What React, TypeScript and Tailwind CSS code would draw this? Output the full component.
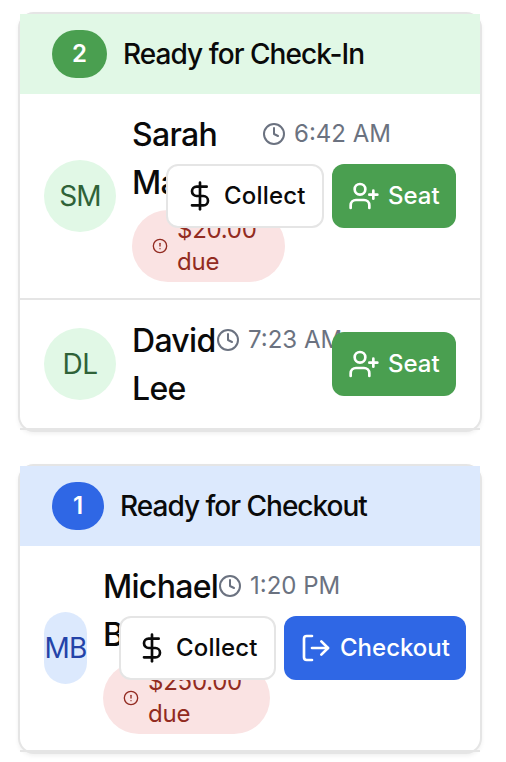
import type { ReactNode } from "react";
import { CircleAlert, Clock, DollarSign, LogOut, UserPlus } from "lucide-react";

function Card({ header, children }: { header: ReactNode; children: ReactNode }) {
  return (
    <section className="rounded-[16px] border-2 border-[#e5e5e5] bg-white shadow-[0_2px_4px_rgba(0,0,0,0.06)]">
      {header}
      {children}
    </section>
  );
}

function Name({ first, last, className }: { first: string; last: string; className: string }) {
  return (
    <h3 className={`h-24 pt-px text-[32px] leading-[48px] font-medium tracking-[-0.7px] ${className}`}>
      {first}
      <br />
      {last}
    </h3>
  );
}

function Due({ amount, className }: { amount: string; className: string }) {
  return (
    <div className={`mt-1 flex h-[72px] items-center gap-[9px] rounded-full bg-[#fae3e3] pl-5 text-2xl leading-8 text-[#922b21] ${className}`}>
      <CircleAlert size={16} className="shrink-0" />
      <div>
        <div className="tracking-[-0.25px]">{amount}</div>
        <div className="tracking-[-0.25px]">due</div>
      </div>
    </div>
  );
}

function Time({ value }: { value: string }) {
  return (
    <div className="flex h-12 items-center gap-2 whitespace-nowrap text-2xl text-[#6b7280]">
      <Clock size={24} />
      <span>{value}</span>
    </div>
  );
}

function Collect({ className }: { className: string }) {
  return (
    <button className={`flex h-16 items-center gap-2 rounded-[12px] border-2 border-[#e5e5e5] bg-white text-2xl font-medium text-[#0a0a0a] ${className}`}>
      <DollarSign size={32} />
      <span className="tracking-[0.2px]">Collect</span>
    </button>
  );
}

function Seat() {
  return (
    <button className="flex h-16 w-[124px] items-center gap-2 rounded-[12px] bg-[#4a9f50] pl-4 text-2xl font-medium text-white">
      <UserPlus size={32} />
      <span>Seat</span>
    </button>
  );
}

export default function App() {
  return (
    <main className="flex h-[762px] w-[506px] flex-col gap-8 bg-white pt-3 pr-6 pl-[18px] font-['Inter',sans-serif] text-[#0a0a0a]">
      <Card
        header={
          <header className="flex h-20 items-center gap-4 bg-[#e1f8e6] px-8">
            <span className="flex h-12 w-[55px] items-center justify-center rounded-full bg-[#4a9f50] text-2xl font-semibold text-white">2</span>
            <h2 className="text-[28px] font-medium tracking-[-0.95px]">Ready for Check-In</h2>
          </header>
        }
      >
        <article className="relative flex items-center gap-4 border-b-2 border-[#e5e5e5] px-6 py-4">
          <div className="flex size-[72px] items-center justify-center rounded-full bg-[#e1f8e6] text-[28px] tracking-[-1px] text-[#2f6238]">SM</div>
          <div>
            <div className="flex">
              <Name first="Sarah" last="Martinez" className="w-[130px]" />
              <Time value="6:42 AM" />
            </div>
            <Due amount="$20.00" className="w-[153px]" />
          </div>
          <div className="absolute top-[70px] right-6 flex gap-2">
            <Collect className="w-[158px] pl-4" />
            <Seat />
          </div>
        </article>
        <article className="relative flex items-center gap-4 border-b-2 border-[#e5e5e5] px-6 py-4">
          <div className="flex size-[72px] items-center justify-center rounded-full bg-[#e1f8e6] text-[28px] tracking-[-0.4px] text-[#2f6238]">DL</div>
          <div className="flex">
            <Name first="David" last="Lee" className="w-[84px]" />
            <Time value="7:23 AM" />
          </div>
          <div className="absolute top-8 right-6">
            <Seat />
          </div>
        </article>
      </Card>
      <Card
        header={
          <header className="flex h-20 items-center gap-4 bg-[#dce9fd] px-8">
            <span className="flex h-12 w-[52px] items-center justify-center rounded-full bg-[#2f67e5] text-2xl font-semibold text-white">1</span>
            <h2 className="text-[28px] font-medium tracking-[-1px]">Ready for Checkout</h2>
          </header>
        }
      >
        <article className="relative flex items-center gap-4 border-b-2 border-[#e5e5e5] px-6 py-4">
          <div className="flex h-[72px] w-[43px] items-center justify-center rounded-full bg-[#dce9fd] text-[28px] tracking-[-0.8px] text-[#2443a8]">MB</div>
          <div>
            <div className="flex">
              <Name first="Michael" last="Brown" className="w-[115px]" />
              <Time value="1:20 PM" />
            </div>
            <Due amount="$250.00" className="w-[167px]" />
          </div>
          <div className="absolute top-[70px] right-[14px] flex gap-2">
            <Collect className="w-[157px] pl-[15px]" />
            <button className="flex h-16 w-[182px] items-center gap-2 rounded-[12px] bg-[#2f67e5] pl-4 text-2xl font-medium text-white">
              <LogOut size={32} />
              <span>Checkout</span>
            </button>
          </div>
        </article>
      </Card>
    </main>
  );
}
